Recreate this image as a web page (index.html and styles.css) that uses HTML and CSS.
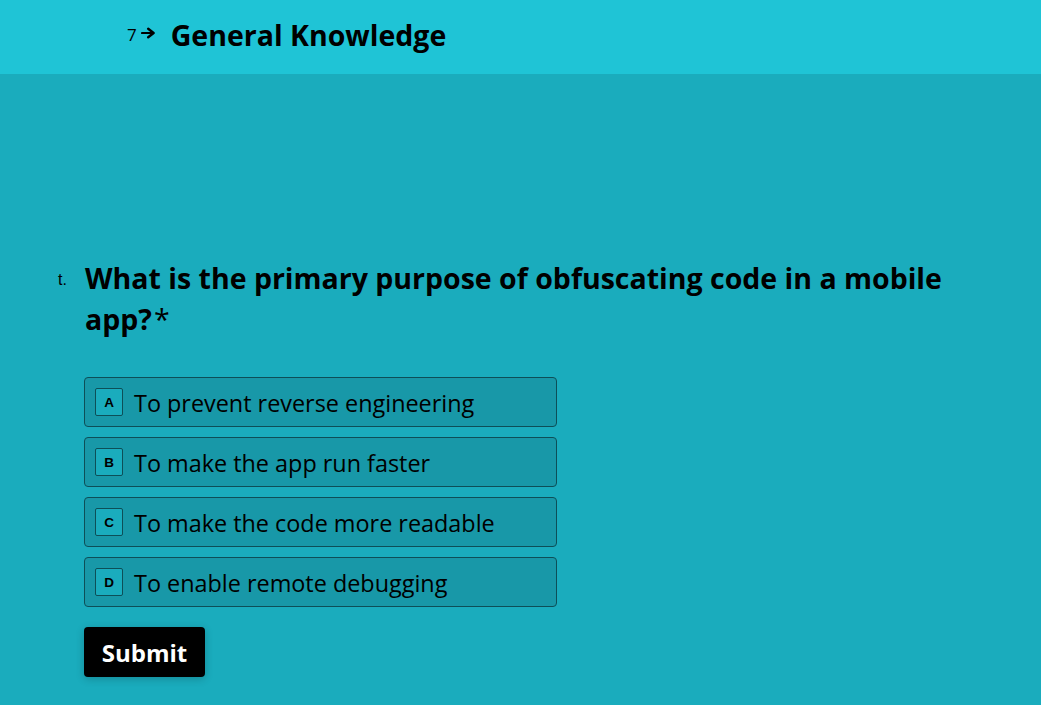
FILE: index.html
```html
<!DOCTYPE html>
<html>
<head>
<meta charset="utf-8">
<link rel="stylesheet" href="styles.css">
</head>
<body>
<header class="topbar">
  <span class="num">7</span>
  <svg class="arrow" width="14" height="12" viewBox="0 0 14 12"><path d="M1 6H11" fill="none" stroke="#000" stroke-width="2.2" stroke-linecap="round"/><path d="M7.2 1.8L12.6 6L7.2 10.2" fill="none" stroke="#000" stroke-width="2.4" stroke-linecap="round" stroke-linejoin="round"/></svg>
  <h1 class="title">General Knowledge</h1>
</header>
<main class="content">
  <div class="question">
    <span class="qnum">t.</span>
    <h2 class="qtext">What is the primary purpose of obfuscating code in a mobile app?<span class="req">*</span></h2>
  </div>
  <div class="options">
    <div class="option"><span class="key">A</span><span class="label">To prevent reverse engineering</span></div>
    <div class="option"><span class="key">B</span><span class="label">To make the app run faster</span></div>
    <div class="option"><span class="key">C</span><span class="label">To make the code more readable</span></div>
    <div class="option"><span class="key">D</span><span class="label">To enable remote debugging</span></div>
  </div>
  <button class="submit">Submit</button>
</main>
</body>
</html>
```
FILE: styles.css
```css
html, body {
  margin: 0;
  padding: 0;
  height: 100%;
}
body {
  background: #1aacbd;
  font-family: "Open Sans", "Noto Sans", sans-serif;
  color: #000;
}
.topbar {
  height: 74px;
  background: #1fc4d6;
  display: flex;
  align-items: center;
  padding-left: 127px;
  box-sizing: border-box;
}
.num {
  font-size: 17px;
  line-height: 1;
  margin-top: -6px;
}
.arrow {
  margin-left: 4px;
  margin-top: -8px;
}
.title {
  margin: -4px 0 0 16px;
  font-size: 28.5px;
  font-weight: 700;
  line-height: 1;
}
.content {
  padding: 184px 0 0 58px;
}
.question {
  display: flex;
  align-items: flex-start;
}
.qnum {
  font-family: "Liberation Sans", Arial, sans-serif;
  font-size: 16px;
  width: 27px;
  margin-top: 13px;
  flex: none;
}
.qtext {
  margin: 0;
  font-size: 28.5px;
  font-weight: 700;
  line-height: 41px;
  width: 890px;
}
.req {
  font-weight: 400;
  margin-left: 2px;
}
.options {
  margin: 37px 0 0 26px;
  display: flex;
  flex-direction: column;
  gap: 10px;
}
.option {
  width: 473px;
  height: 50px;
  box-sizing: border-box;
  background: #1898a8;
  border: 1px solid #0d4f58;
  border-radius: 4px;
  display: flex;
  align-items: center;
  padding-left: 10px;
}
.key {
  width: 28px;
  height: 28px;
  box-sizing: border-box;
  border: 1px solid #0d4f58;
  border-radius: 2px;
  background: #1aacbd;
  display: flex;
  align-items: center;
  justify-content: center;
  font-family: "Liberation Sans", Arial, sans-serif;
  font-weight: 700;
  font-size: 13.5px;
}
.label {
  margin: 4px 0 0 11px;
  font-size: 23.4px;
  line-height: 1;
}
.submit {
  margin: 20px 0 0 26px;
  width: 121px;
  height: 50px;
  background: #000;
  color: #fff;
  border: none;
  border-radius: 4px;
  font-family: "Open Sans", "Noto Sans", sans-serif;
  font-weight: 700;
  font-size: 24px;
  box-shadow: 0 2px 8px rgba(0,0,0,0.2);
  padding: 0;
}
```
